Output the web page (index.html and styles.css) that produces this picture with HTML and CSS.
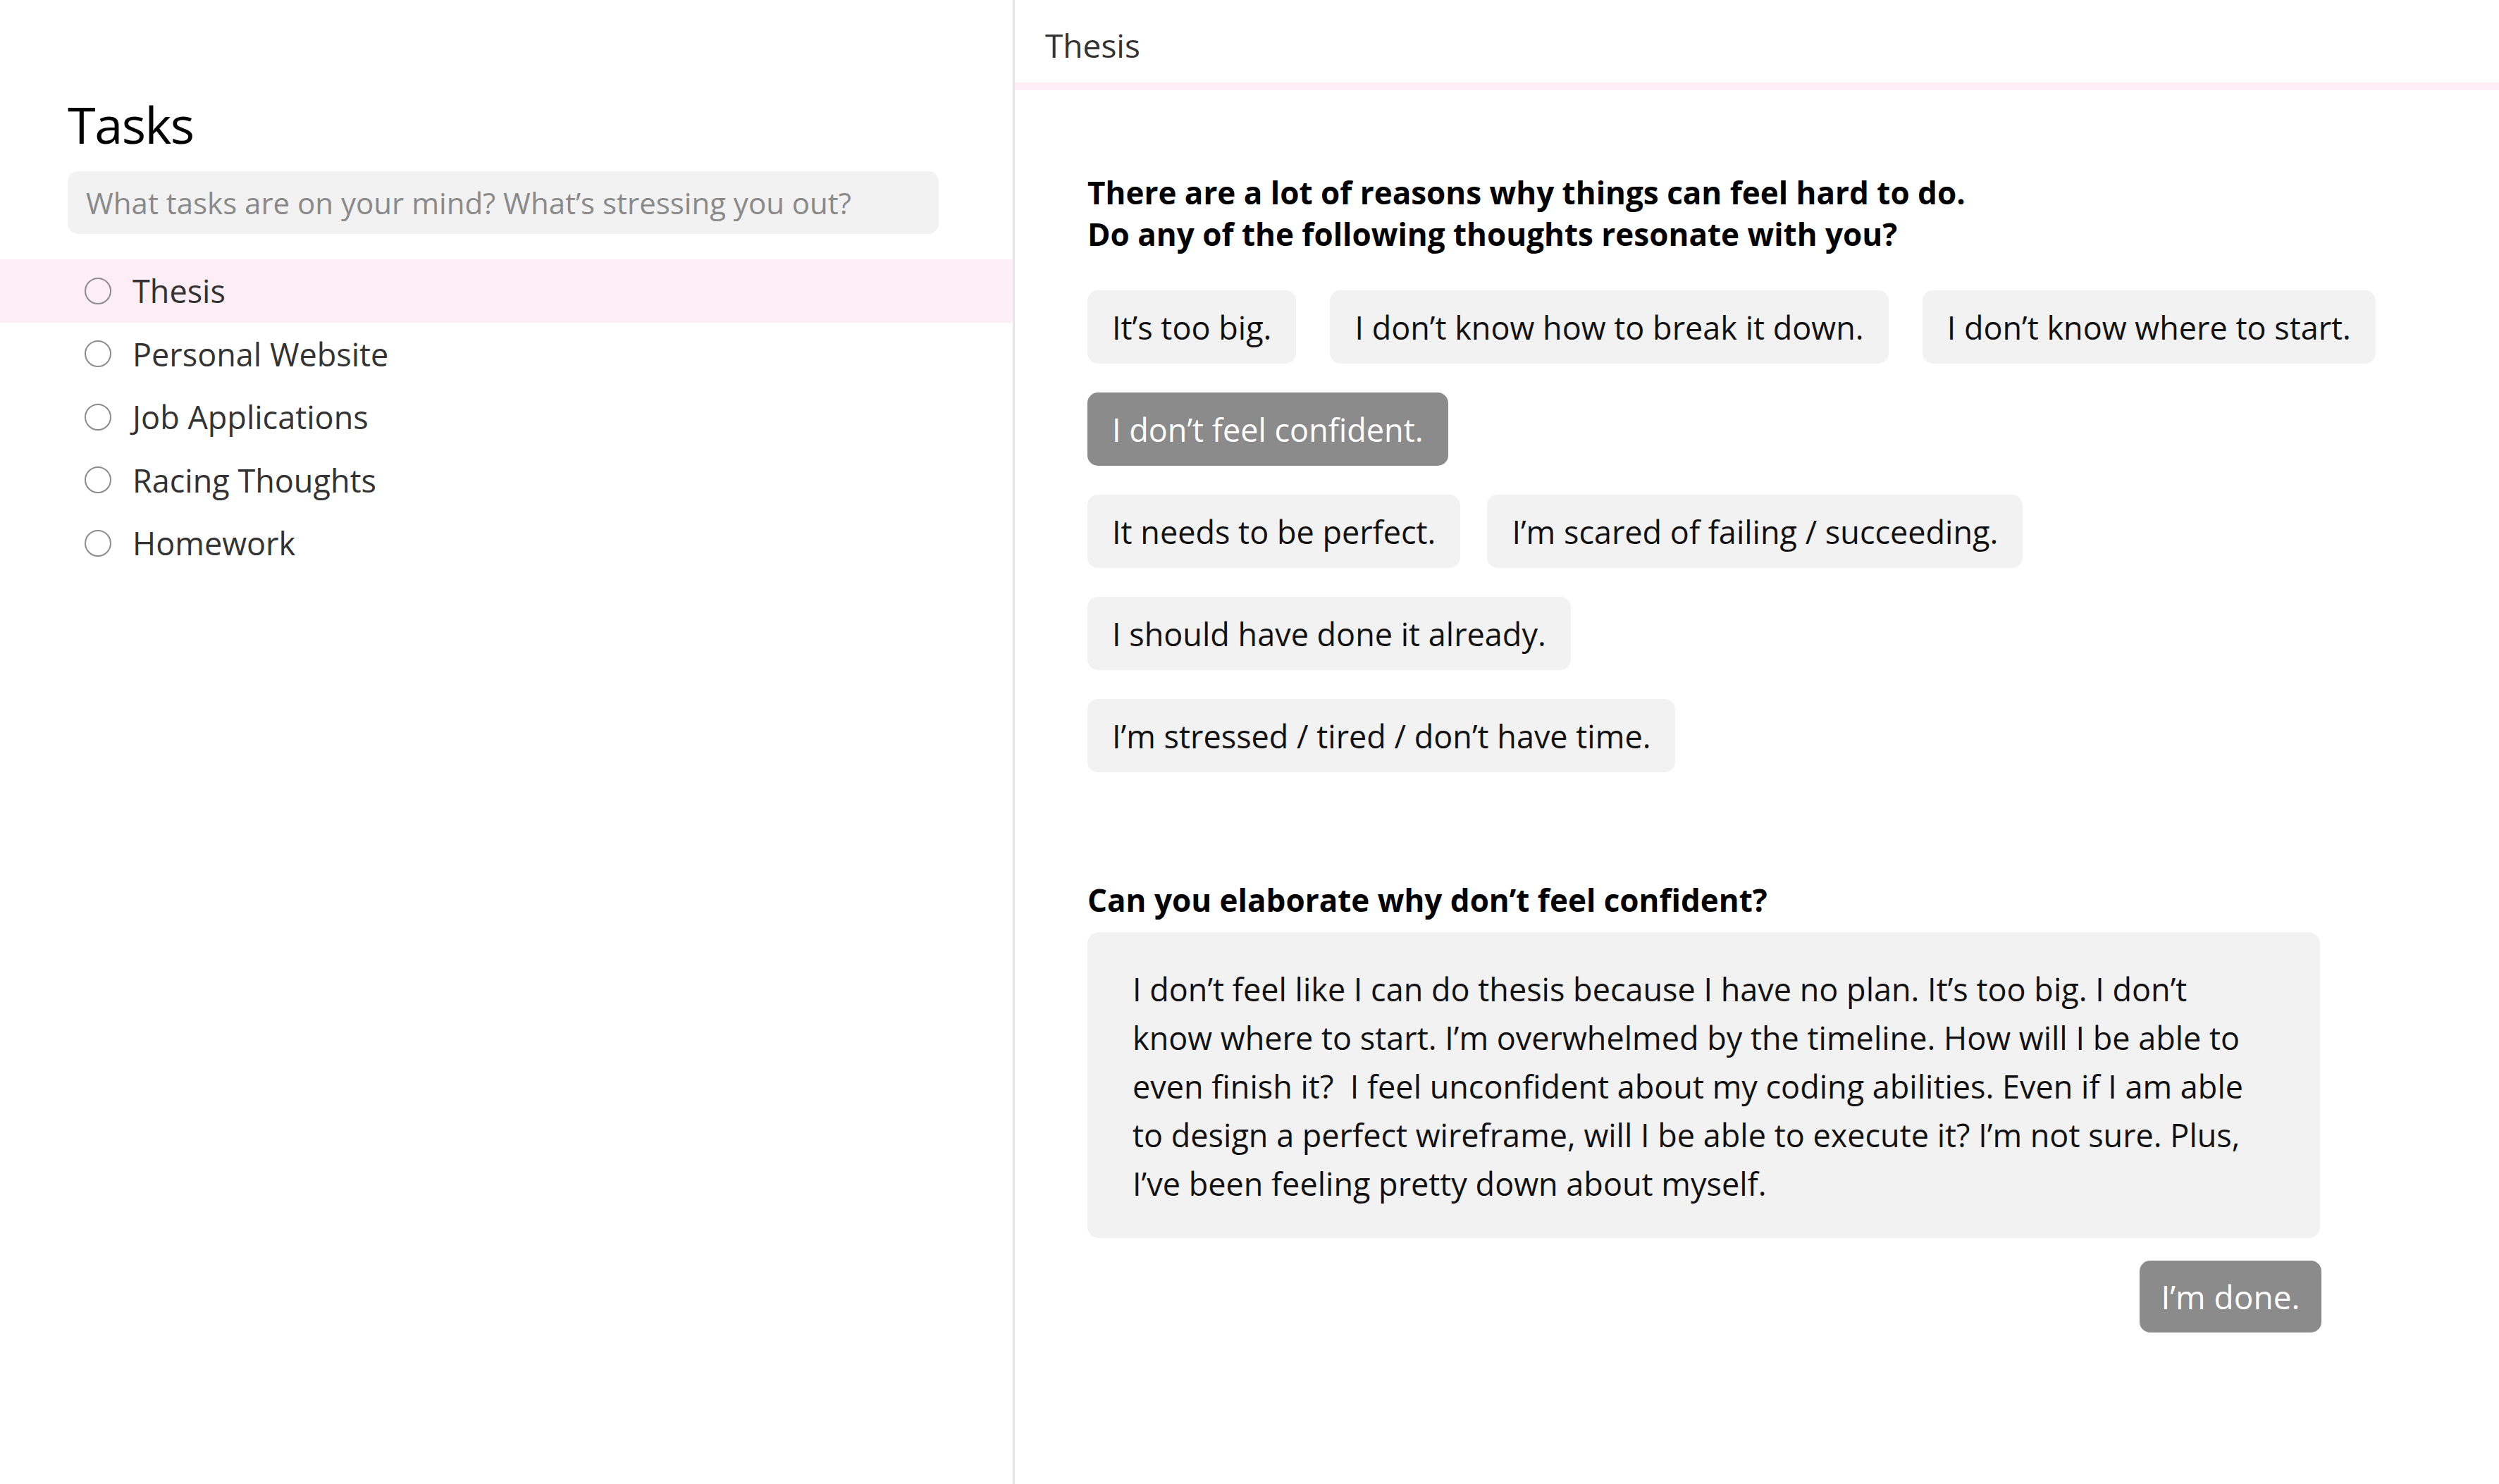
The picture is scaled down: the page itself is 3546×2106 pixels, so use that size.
FILE: index.html
```html
<!DOCTYPE html>
<html lang="en">
<head>
<meta charset="utf-8">
<title>Tasks</title>
<link rel="stylesheet" href="styles.css">
</head>
<body>
<div class="app">
  <aside class="sidebar">
    <h1 class="sidebar-title">Tasks</h1>
    <div class="task-input">What tasks are on your mind? What’s stressing you out?</div>
    <ul class="task-list">
      <li class="task active"><span class="radio"></span><span class="task-name">Thesis</span></li>
      <li class="task"><span class="radio"></span><span class="task-name">Personal Website</span></li>
      <li class="task"><span class="radio"></span><span class="task-name">Job Applications</span></li>
      <li class="task"><span class="radio"></span><span class="task-name">Racing Thoughts</span></li>
      <li class="task"><span class="radio"></span><span class="task-name">Homework</span></li>
    </ul>
  </aside>
  <main class="detail">
    <header class="detail-header">Thesis</header>
    <section class="detail-body">
      <h2 class="prompt">There are a lot of reasons why things can feel hard to do.<br>Do any of the following thoughts resonate with you?</h2>
      <div class="chips">
        <div class="chip-row">
          <button class="chip">It’s too big.</button>
          <button class="chip">I don’t know how to break it down.</button>
          <button class="chip">I don’t know where to start.</button>
        </div>
        <div class="chip-row">
          <button class="chip selected">I don’t feel confident.</button>
        </div>
        <div class="chip-row chip-row-tight">
          <button class="chip">It needs to be perfect.</button>
          <button class="chip">I’m scared of failing / succeeding.</button>
        </div>
        <div class="chip-row">
          <button class="chip">I should have done it already.</button>
        </div>
        <div class="chip-row">
          <button class="chip">I’m stressed / tired / don’t have time.</button>
        </div>
      </div>
      <h3 class="question">Can you elaborate why don’t feel confident?</h3>
      <div class="answer">I don’t feel like I can do thesis because I have no plan. It’s too big. I don’t<br>know where to start. I’m overwhelmed by the timeline. How will I be able to<br>even finish it?&nbsp; I feel unconfident about my coding abilities. Even if I am able<br>to design a perfect wireframe, will I be able to execute it? I’m not sure. Plus,<br>I’ve been feeling pretty down about myself.</div>
      <div class="actions">
        <button class="done">I’m done.</button>
      </div>
    </section>
  </main>
</div>
</body>
</html>
```
FILE: styles.css
```css
* {
  box-sizing: border-box;
}

html, body {
  margin: 0;
  padding: 0;
  background: #ffffff;
}

body {
  font-family: "Open Sans", "Noto Sans", sans-serif;
  color: #111111;
}

.app {
  display: flex;
  width: 3546px;
  height: 2106px;
}

/* ---------- Sidebar ---------- */
.sidebar {
  width: 1440px;
  flex: none;
  border-right: 3px solid #e6e6e6;
}

.sidebar-title {
  margin: 136px 0 0 96px;
  font-size: 72px;
  line-height: 80px;
  font-weight: 400;
  letter-spacing: -1.5px;
  color: #000000;
}

.task-input {
  margin: 27px 0 0 96px;
  width: 1236px;
  height: 89px;
  padding: 0 26px;
  border-radius: 15px;
  background: #f2f2f2;
  color: #8a8a8a;
  font-size: 42px;
  display: flex;
  align-items: center;
}

.task-list {
  list-style: none;
  margin: 36px 0 0 0;
  padding: 0;
}

.task {
  height: 89.5px;
  display: flex;
  align-items: center;
  gap: 30px;
  padding-left: 120px;
  color: #333333;
  font-size: 45px;
}

.task.active {
  background: #fdedf4;
}

.radio {
  width: 38px;
  height: 38px;
  border-radius: 50%;
  border: 2.5px solid #8c8c8c;
  flex: none;
}

/* ---------- Detail ---------- */
.detail {
  flex: 1;
  display: flex;
  flex-direction: column;
}

.detail-header {
  height: 128px;
  padding: 41px 0 0 43px;
  border-bottom: 11px solid #fdedf4;
  font-size: 46px;
  line-height: 46px;
  color: #333333;
}

.detail-body {
  padding: 116px 0 0 103px;
  width: 1852px;
  display: flex;
  flex-direction: column;
}

.prompt {
  margin: 0;
  font-size: 44px;
  line-height: 59px;
  font-weight: 700;
  color: #000000;
}

.chips {
  margin-top: 50px;
  display: flex;
  flex-direction: column;
  gap: 41px;
}

.chip-row {
  display: flex;
  gap: 48px;
}

.chip-row-tight {
  gap: 38px;
}

.chip {
  font-family: inherit;
  border: none;
  margin: 0;
  height: 104px;
  padding: 0 35px;
  border-radius: 15px;
  background: #f2f2f2;
  color: #111111;
  font-size: 45px;
  white-space: nowrap;
}

.chip.selected {
  background: #8b8b8b;
  color: #ffffff;
}

.question {
  margin: 152px 0 0 0;
  font-size: 44px;
  line-height: 59px;
  font-weight: 700;
  color: #000000;
}

.answer {
  margin-top: 16px;
  width: 1749px;
  height: 434px;
  padding: 46px 64px 0 64px;
  border-radius: 16px;
  background: #f2f2f2;
  font-size: 45px;
  line-height: 69px;
  color: #111111;
  white-space: nowrap;
}

.actions {
  width: 1751px;
  margin-top: 32px;
  display: flex;
  justify-content: flex-end;
}

.done {
  font-family: inherit;
  border: none;
  margin: 0;
  height: 102px;
  width: 258px;
  padding: 0;
  border-radius: 15px;
  background: #8b8b8b;
  color: #ffffff;
  font-size: 46px;
}
```
